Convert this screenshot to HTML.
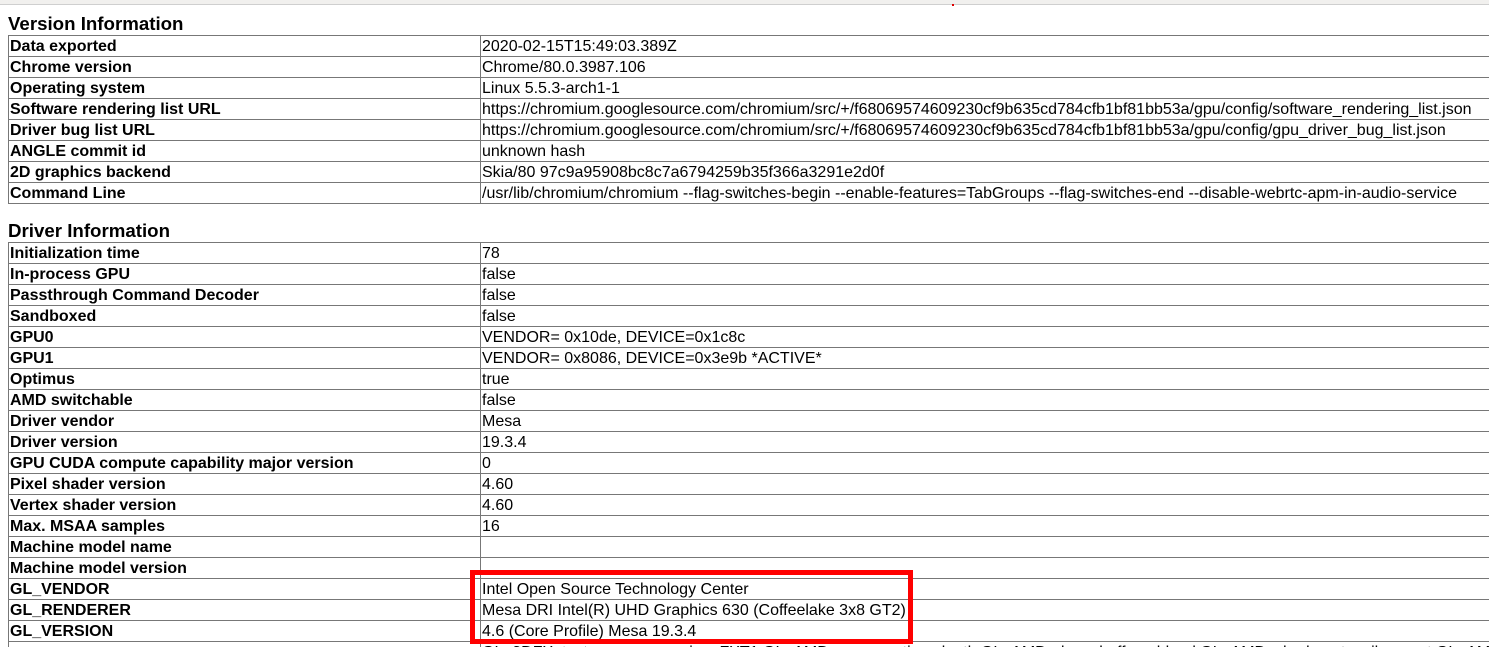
<!DOCTYPE html>
<html><head><meta charset="utf-8"><style>
html,body{margin:0;padding:0;background:#fff;overflow:hidden;width:1489px;height:647px;}
body{font-family:"Liberation Sans",Arial,sans-serif;font-size:16px;color:#000;position:relative;}
.top{position:absolute;left:0;top:0;width:1489px;height:4px;background:#f1f0ee;border-bottom:1px solid #cfcfcf;}
.dot{position:absolute;left:952px;top:4px;width:2px;height:2px;background:#d00;}
h3{position:absolute;left:8px;margin:0;font-size:18.7px;font-weight:bold;line-height:22px;}
table{position:absolute;left:8px;border-collapse:collapse;width:1500px;table-layout:fixed;}
td{border:1px solid #777;padding:1px 2px 0 1px;height:19px;line-height:19px;white-space:nowrap;overflow:hidden;vertical-align:middle;}
td.k{width:468px;font-weight:bold;}
.red{position:absolute;left:470px;top:570px;width:433px;height:64px;border:5px solid #f00;}
</style></head><body>
<div class="top"></div><div class="dot"></div>
<h3 style="top:13px">Version Information</h3>
<table style="top:35px">
<tr><td class="k">Data exported</td><td>2020-02-15T15:49:03.389Z</td></tr>
<tr><td class="k">Chrome version</td><td>Chrome/80.0.3987.106</td></tr>
<tr><td class="k">Operating system</td><td>Linux 5.5.3-arch1-1</td></tr>
<tr><td class="k">Software rendering list URL</td><td>https://chromium.googlesource.com/chromium/src/+/f68069574609230cf9b635cd784cfb1bf81bb53a/gpu/config/software_rendering_list.json</td></tr>
<tr><td class="k">Driver bug list URL</td><td>https://chromium.googlesource.com/chromium/src/+/f68069574609230cf9b635cd784cfb1bf81bb53a/gpu/config/gpu_driver_bug_list.json</td></tr>
<tr><td class="k">ANGLE commit id</td><td>unknown hash</td></tr>
<tr><td class="k">2D graphics backend</td><td>Skia/80 97c9a95908bc8c7a6794259b35f366a3291e2d0f</td></tr>
<tr><td class="k">Command Line</td><td>/usr/lib/chromium/chromium --flag-switches-begin --enable-features=TabGroups --flag-switches-end --disable-webrtc-apm-in-audio-service</td></tr>
</table>
<h3 style="top:220px">Driver Information</h3>
<table style="top:242px">
<tr><td class="k">Initialization time</td><td>78</td></tr>
<tr><td class="k">In-process GPU</td><td>false</td></tr>
<tr><td class="k">Passthrough Command Decoder</td><td>false</td></tr>
<tr><td class="k">Sandboxed</td><td>false</td></tr>
<tr><td class="k">GPU0</td><td>VENDOR= 0x10de, DEVICE=0x1c8c</td></tr>
<tr><td class="k">GPU1</td><td>VENDOR= 0x8086, DEVICE=0x3e9b *ACTIVE*</td></tr>
<tr><td class="k">Optimus</td><td>true</td></tr>
<tr><td class="k">AMD switchable</td><td>false</td></tr>
<tr><td class="k">Driver vendor</td><td>Mesa</td></tr>
<tr><td class="k">Driver version</td><td>19.3.4</td></tr>
<tr><td class="k">GPU CUDA compute capability major version</td><td>0</td></tr>
<tr><td class="k">Pixel shader version</td><td>4.60</td></tr>
<tr><td class="k">Vertex shader version</td><td>4.60</td></tr>
<tr><td class="k">Max. MSAA samples</td><td>16</td></tr>
<tr><td class="k">Machine model name</td><td></td></tr>
<tr><td class="k">Machine model version</td><td></td></tr>
<tr><td class="k">GL_VENDOR</td><td>Intel Open Source Technology Center</td></tr>
<tr><td class="k">GL_RENDERER</td><td>Mesa DRI Intel(R) UHD Graphics 630 (Coffeelake 3x8 GT2)</td></tr>
<tr><td class="k">GL_VERSION</td><td>4.6 (Core Profile) Mesa 19.3.4</td></tr>
<tr><td class="k"></td><td style="vertical-align:top">GL_3DFX_texture_compression_FXT1 GL_AMD_conservative_depth GL_AMD_draw_buffers_blend GL_AMD_shader_stencil_export GL_AMD_shader_trinary_minmax</td></tr>
</table>
<div class="red"></div>
</body></html>
